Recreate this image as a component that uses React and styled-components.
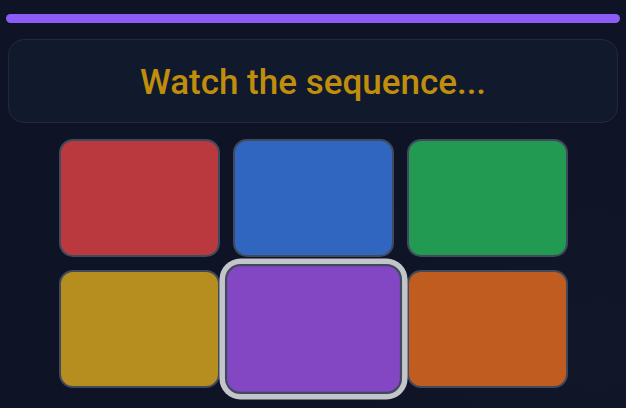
import React from "react";
import styled, { createGlobalStyle } from "styled-components";

const GlobalStyle = createGlobalStyle`
  html, body {
    margin: 0;
    padding: 0;
    background: #0e1325;
    font-family: Roboto, Inter, "Noto Sans", sans-serif;
  }
`;

const Page = styled.div`
  width: 626px;
  height: 408px;
  overflow: hidden;
  box-sizing: border-box;
  padding-top: 14px;
  display: flex;
  flex-direction: column;
  align-items: center;
  background: radial-gradient(circle at 95% 85%, #111729 0%, #0e1325 40%);
`;

const ProgressTrack = styled.div`
  width: 614px;
  height: 9px;
  border-radius: 999px;
  background: #8b5cf6;
`;

const StatusBox = styled.div`
  margin-top: 16px;
  width: 610px;
  height: 84px;
  box-sizing: border-box;
  border: 1px solid #1f2a3d;
  border-radius: 16px;
  background: #111a2d;
  display: flex;
  align-items: center;
  justify-content: center;
`;

const StatusText = styled.div`
  color: #c08e0c;
  font-size: 35px;
  font-weight: 500;
  padding-top: 2px;
`;

const Grid = styled.div`
  margin-top: 16px;
  display: grid;
  grid-template-columns: repeat(3, 161px);
  grid-auto-rows: 118px;
  gap: 13px;
`;

const Tile = styled.button`
  box-sizing: border-box;
  border: 2px solid #3f4a5c;
  border-radius: 14px;
  background: ${p => p.$color};
  padding: 0;
  cursor: pointer;
  transform: ${p => (p.$active ? "scale(1.1)" : "none")};
  box-shadow: ${p => (p.$active ? "0 0 0 5px #c3c5cb" : "none")};
  position: relative;
  z-index: ${p => (p.$active ? 1 : 0)};
`;

const tiles = [
  { id: "red", color: "#b9393e" },
  { id: "blue", color: "#3166c0" },
  { id: "green", color: "#229a52" },
  { id: "yellow", color: "#b58e1f" },
  { id: "purple", color: "#8447c4", active: true },
  { id: "orange", color: "#c05c20" },
];

export default function App() {
  return (
    <>
      <GlobalStyle />
      <Page>
        <ProgressTrack />
        <StatusBox>
          <StatusText>Watch the sequence...</StatusText>
        </StatusBox>
        <Grid>
          {tiles.map(t => (
            <Tile key={t.id} $color={t.color} $active={t.active} aria-label={t.id} />
          ))}
        </Grid>
      </Page>
    </>
  );
}
